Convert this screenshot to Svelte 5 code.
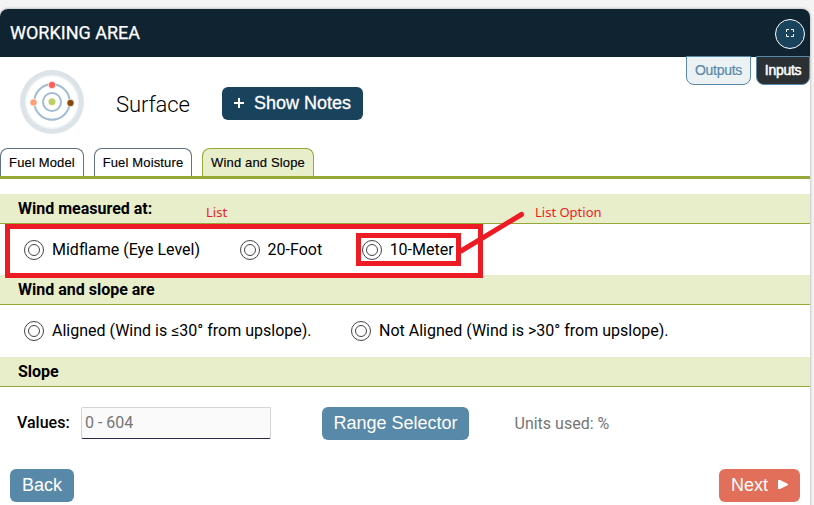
<script>
  const windHeight = ['Midflame (Eye Level)', '20-Foot', '10-Meter'];
  const alignment = ['Aligned (Wind is ≤30° from upslope).', 'Not Aligned (Wind is >30° from upslope).'];
</script>

<main>
  <section class="panel">
    <header class="bar">
      <h1>WORKING AREA</h1>
      <button class="expand" aria-label="Expand">
        <svg width="8" height="8" viewBox="0 0 8 8" fill="none" stroke="#fff" stroke-width="1"><path d="M.5 3V.5H3M5 .5h2.5V3M7.5 5v2.5H5M3 7.5H.5V5" /></svg>
      </button>
    </header>

    <div class="module">
      <svg class="logo" width="64" height="64" viewBox="0 0 64 64">
        <circle cx="32" cy="32" r="32" fill="#dce4e8" />
        <circle cx="32" cy="32" r="27" fill="#f1f4f6" />
        <circle cx="32" cy="32" r="25.5" fill="#fff" />
        <g fill="none" stroke="#a1bdd3" stroke-width="2">
          <circle cx="32" cy="32" r="17.7" />
          <circle cx="32" cy="32" r="9" />
        </g>
        <g stroke="#fff" stroke-width=".8">
          <circle cx="32" cy="15" r="3.7" fill="#ff5e5a" />
          <circle cx="13.5" cy="32.5" r="3.7" fill="#ff9f73" />
          <circle cx="50.5" cy="33" r="3.7" fill="#85490f" />
        </g>
        <circle cx="32" cy="31.7" r="3.5" fill="#bdd063" />
      </svg>
      <h2>Surface</h2>
      <button class="btn notes">
        <svg width="10" height="10" viewBox="0 0 10 10" stroke="#fff" stroke-width="2"><path d="M5 0v10M0 5h10" /></svg>
        <span>Show Notes</span>
      </button>
      <nav class="io">
        <button class="outputs">Outputs</button>
        <button class="inputs">Inputs</button>
      </nav>
    </div>

    <nav class="tabs">
      <button class="t1">Fuel Model</button>
      <button class="t2">Fuel Moisture</button>
      <button class="t3">Wind and Slope</button>
    </nav>

    <h3>Wind measured at:</h3>
    <div class="options height">
      {#each windHeight as name}
        <label><i></i><span>{name}</span></label>
      {/each}
    </div>
    <h3>Wind and slope are</h3>
    <div class="options align">
      {#each alignment as name}
        <label><i></i><span>{name}</span></label>
      {/each}
    </div>
    <h3>Slope</h3>
    <div class="values">
      <label for="slope">Values:</label>
      <input id="slope" placeholder="0 - 604" />
      <button class="btn range">Range Selector</button>
      <span class="units">Units used: %</span>
    </div>
    <footer>
      <button class="btn back">Back</button>
      <button class="btn next">Next
        <svg width="10" height="9" viewBox="0 0 10 9" fill="#fff"><path d="M0 0h2l8 4v1L2 9H0z" /></svg>
      </button>
    </footer>
  </section>

  <svg class="marks" width="814" height="505" viewBox="0 0 814 505" fill="none" stroke="#ed1c24" stroke-width="5">
    <path d="M7.5 226.500h473v49H7.500zM358.500 235.500h100v28h-100z" />
    <path d="M461 251L521.500 214.500" stroke-linecap="round" />
  </svg>
  <span class="note list">List</span>
  <span class="note option">List Option</span>
</main>

<style>
  :global(body) { margin: 0; background: #f4f4f4; }
  main { position: relative; width: 814px; height: 505px; box-sizing: border-box; padding-top: 9px; overflow: hidden; background: #f4f4f4; font-family: Roboto, sans-serif; font-size: 16px; color: #000; }
  h1, h2, h3 { margin: 0; }
  button { font-family: "Liberation Sans", Arial, sans-serif; margin: 0; padding: 0; border: 0; box-sizing: border-box; white-space: nowrap; }
  .panel { width: 810px; height: 510px; background: #fff; border-radius: 8px 8px 0 0; box-shadow: 0 0 3px #999; }
  .bar { height: 48px; box-sizing: border-box; padding: 0 5px 0 10px; display: flex; align-items: center; justify-content: space-between; background: #0f2330; border-radius: 8px 8px 0 0; color: #fff; }
  h1 { font-size: 18px; font-weight: 400; line-height: 48px; -webkit-text-stroke: .25px #fff; }
  .expand { width: 30px; height: 30px; margin-top: 2px; border: 1px solid #fff; border-radius: 50%; background: #19425c; display: flex; align-items: center; justify-content: center; }
  .expand svg { margin-top: -2px; }
  .module { height: 91px; display: flex; align-items: flex-start; }
  .logo { margin: 13px 0 0 20px; flex: none; }
  h2 { width: 106px; margin: 34px 0 0 32px; font-size: 22px; line-height: 28px; font-weight: 300; letter-spacing: -.1px; color: #000; }
  .btn { height: 33px; border-radius: 6px; font-size: 18px; color: #fff; background: #5989a9; display: flex; align-items: center; justify-content: center; }
  .notes { width: 141px; margin-top: 30px; background: #19425c; gap: 10px; -webkit-text-stroke: .3px #fff; }
  .notes svg { margin-top: -2px; }
  .io { display: flex; margin: -1px 0 0 auto; gap: 5px; }
  .io button { height: 29px; border: 1px solid #5989a9; border-radius: 0 0 8px 8px; font-size: 14px; padding-bottom: 2px; letter-spacing: -.3px; }
  .outputs { width: 65px; background: #ecf1f4; color: #5989a9; -webkit-text-stroke: .2px #5989a9; }
  .inputs { width: 54px; background: #2b3034; color: #fff; -webkit-text-stroke: .5px #fff; }
  .tabs { display: flex; gap: 10px; height: 31px; box-sizing: border-box; border-bottom: 3px solid #97a738; }
  .tabs button { height: 28px; border: 1px solid #607386; border-bottom: 0; border-radius: 8px 8px 0 0; background: #fff; font-size: 13px; letter-spacing: .15px; color: #000; -webkit-text-stroke: .15px #000; }
  .t1 { width: 84px; }
  .t2 { width: 98px; }
  .tabs .t3 { width: 112px; background: #e8edca; border-color: #97a738; }
  h3 { height: 30px; box-sizing: border-box; border-bottom: 1px solid #97a738; background: #e8edca; padding-left: 18px; font-size: 16px; line-height: 30px; font-weight: 700; }
  .tabs + h3 { margin-top: 15px; }
  .options { display: flex; align-items: center; padding-left: 24px; gap: 39.5px; }
  .height { height: 51px; }
  .align { height: 52px; box-sizing: border-box; padding-bottom: 1px; }
  .options label { display: flex; align-items: center; gap: 8px; white-space: nowrap; }
  i { width: 20px; height: 20px; box-sizing: border-box; border: 1px solid #444; border-radius: 50%; padding: 3px; flex: none; }
  i::before { content: ""; display: block; width: 12px; height: 12px; box-sizing: border-box; border: 1px solid #444; border-radius: 50%; }
  .values { height: 74px; box-sizing: border-box; padding: 0 0 2px 17px; display: flex; align-items: center; }
  .values label { width: 64px; font-weight: 500; margin-top: -2px; }
  input { width: 190px; height: 32px; box-sizing: border-box; border: 1px solid #d4d4d4; border-bottom-color: #28284f; border-radius: 2px; padding: 0 3px 2px; margin: 0; font: 16px Roboto, sans-serif; background: #fafafa; }
  input::placeholder { color: #757575; opacity: 1; }
  .range { width: 147px; margin-left: 51px; }
  .units { margin-left: 45.5px; color: #757575; }
  footer { display: flex; justify-content: space-between; padding: 8px 10px 0; }
  .back { width: 64px; }
  .next { width: 81px; gap: 10px; background: #e16f5a; }
  .next svg { margin-top: -2px; }
  .marks { position: absolute; left: 0; top: 0; }
  .note { position: absolute; font: 13px/18px "Noto Sans", sans-serif; color: #ed1c24; }
  .list { left: 206px; top: 203px; }
  .option { left: 535px; top: 203px; }
</style>
